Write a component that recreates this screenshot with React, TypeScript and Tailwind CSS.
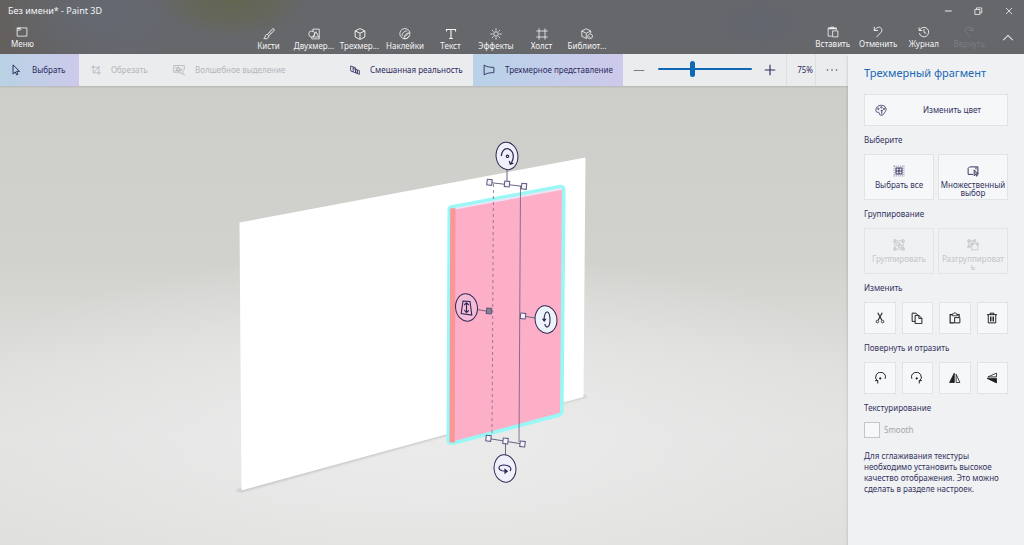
import type { ReactNode } from "react";

type IconProps = { children: ReactNode; className?: string };

function Icon({ children, className = "size-3.5" }: IconProps) {
  return (
    <svg
      viewBox="0 0 16 16"
      fill="none"
      stroke="currentColor"
      strokeWidth="1.1"
      className={`shrink-0 ${className}`}
      aria-hidden="true"
    >
      {children}
    </svg>
  );
}

const icons = {
  menu: (
    <>
      <path d="M1.500 2.500h13v11h-13zM1.500 5.500h4l1.500-1.500" />
      <path d="M2 3.200h4" strokeWidth="1.500" />
    </>
  ),
  brush: (
    <>
      <path d="M14.600 1.400c-.8-.8-1.800-.3-2.300.2L6 8.600l1.700 1.700 6.700-6.500c.6-.6 1-1.600.2-2.400z" strokeWidth="1.300" />
      <path d="M6 8.800c-1.800-.4-2.800.7-3 2.200-.2 1.600-.9 2.300-2 2.900 2.300 1 6.600.6 6.700-3.300" strokeWidth="1.300" />
      <path d="M9.200 6l1.500 1.500" />
    </>
  ),
  shapes: (
    <>
      <circle cx="5" cy="8" r="4" />
      <path d="M6.500 4.500V1.500h8.500v13H5V12" />
      <path d="M10.500 5l4 7h-8z" />
    </>
  ),
  cube: (
    <path d="M8 .8l6.500 3v8.200L8 15.200 1.500 12V3.800zM1.500 3.800L8 7l6.500-3.200M8 7v8.200" strokeWidth="1.300" />
  ),
  sticker: (
    <>
      <path d="M14 10.500A6.800 6.800 0 1 1 14.600 6.500" />
      <path d="M14.600 6.500C10 6.500 7 9 6.500 14.500 11 14.500 14.800 11 14.600 6.500z" />
      <path d="M4 10.500c.2-4 3-6.500 7-6.700M7 12l6-5" />
    </>
  ),
  text: <path d="M2 4.500V2h12v2.500M8 2v12M5.500 14h5" strokeWidth="1.500" />,
  effects: (
    <>
      <circle cx="8" cy="8" r="3" />
      <path d="M8 .5v3M8 12.500v3M.5 8h3M12.500 8h3M2.700 2.700l2.100 2.100M11.200 11.200l2.100 2.100M13.300 2.700l-2.100 2.100M4.800 11.200l-2.100 2.100" />
    </>
  ),
  canvas: <path d="M4 .5v15M12 .5v15M.5 4h15M.5 12h15" />,
  library: (
    <>
      <path d="M8 13.500l-1 .5-6-3V4l6-3 6 3v3M1 4l6 3 6-3M7 7v7" />
      <path d="M9 10l3-2.500 3.300 2-.5 3.500-3.300 1.500L9 13z" />
      <path d="M10.500 11.500l2 1" />
    </>
  ),
  paste: (
    <>
      <path d="M6.500 13.500h-5v-11h11v3M5 3.500V1.500h4v2z" />
      <path d="M7.500 6.500h7v8h-7z" />
      <path d="M2 3.500h10" strokeWidth="1.500" />
    </>
  ),
  undo: (
    <path
      d="M3 1v5h5M3 6l2.500-2.700C8.500.5 12 1.500 13 4.200c.7 2-.3 3.500-1.700 5L6 15"
      strokeWidth="1.200"
    />
  ),
  redo: (
    <path
      d="M13 1v5H8M13 6l-2.500-2.700C7.500.5 4 1.500 3 4.200c-.7 2 .3 3.500 1.700 5L10 15"
      strokeWidth="1.200"
    />
  ),
  history: (
    <path
      d="M1.500 2v4h4M2 6a6.300 6.300 0 1 1-.2 3.500M8 4v4.500l3 1.500"
      strokeWidth="1.200"
    />
  ),
  chevronUp: <path d="M1.500 11L8 4.500l6.500 6.500" strokeWidth="1.400" />,
  cursor: <path d="M4 1.200v12.300l3-3 1.800 4 1.800-.9-1.800-3.800h4z" strokeWidth="1.300" />,
  crop: <path d="M0 3.500h12.500V16M3.500 0v12.500H16M3.500 12.500L14.500 1.500" strokeWidth="1.300" />,
  magic: (
    <>
      <path d="M15 8V2H1v9h7" />
      <path d="M4 9l3-5 3 5zM3 5h2" strokeWidth="1.400" />
      <circle cx="10.500" cy="9.500" r="3" />
      <path d="M12.500 12l3 3" strokeWidth="1.400" />
    </>
  ),
  mixed: (
    <path
      d="M1 1.500l8 3v8l-8-3zM5 3v8M5 5.500l10 3.500v6l-5-2M9 7v5l3 1.500V8"
      strokeWidth="1.300"
    />
  ),
  view3d: <path d="M1.500 1.500v13c4-2.500 8-3 13-3v-7C9.500 4.500 5.500 4 1.500 1.500z" strokeWidth="1.200" />,
  palette: (
    <>
      <path d="M7 14.500c-1.500 0-1-1.500-1.200-2.500-.3-1.400-1.800-.8-3-1C.8 10.500.8 7.500 1.800 5.500 3.200 2.800 6 1.500 9 1.700c3.300.2 6 2.600 5.800 5.600-.2 2.600-2 3.500-2.500 5-.5 1.800-3.800 4-5.300 2.200z" />
      <circle cx="4.500" cy="6.500" r="1" />
      <circle cx="8.500" cy="4.500" r="1" />
      <circle cx="12" cy="6.500" r="1" />
      <path d="M9 8v6M7.500 9.500L9 8l1.500 1.500" />
    </>
  ),
  selectAll: (
    <>
      <path d="M1 1.500h14M1 14.500h14M1.500 1v14M14.500 1v14" strokeDasharray="1.500 1.200" opacity=".6" />
      <path d="M4 4h8v8H4zM4 8h8M8 4v8" strokeWidth="1.400" />
    </>
  ),
  multiSelect: (
    <>
      <path d="M8 12.500H1.500v-8L3.500 2.500h11v10M12 3v3" strokeWidth="1.300" />
      <path d="M9.500 6.500v8l2-2 1.300 2.500 1-.6-1.100-2.400H15z" fill="currentColor" fillOpacity=".4" />
    </>
  ),
  group: (
    <>
      <path d="M2.500 2.500h11v11h-11z" />
      <path d="M1 1h3v3H1zM12 1h3v3h-3zM1 12h3v3H1zM12 12h3v3h-3z" />
      <path d="M5 5h4v4H5zM7.500 7.500h4v4h-4z" />
    </>
  ),
  ungroup: (
    <>
      <path d="M2 2.500h8v3M2.500 2v8h3M1 1h3v3H1zM9 1h2.500v2.500H9zM1 9h2.500v2.500H1z" />
      <path d="M6.500 6.500h8v8h-8zM5 5h3v3H5zM13 5h2v3h-2z" />
    </>
  ),
  cut: (
    <>
      <path d="M5 1l5.500 10M11 1L5.500 11" strokeWidth="1.400" />
      <circle cx="4.500" cy="12.800" r="1.700" />
      <circle cx="11.500" cy="12.800" r="1.700" />
    </>
  ),
  copy: (
    <>
      <path d="M5.500 12.500h-4v-11h5l3 3" strokeWidth="1.300" />
      <path d="M5.500 4.500h5l4 4v7h-9zM10.500 4.500v4h4" strokeWidth="1.300" />
    </>
  ),
  paste2: (
    <>
      <path d="M7 14.500H1.500v-11H4M13.500 6.500v-3H11" strokeWidth="1.500" />
      <path d="M4.500 5V2.500h1.500l1-1.500h1.500l1 1.500H11V5z" />
      <path d="M7.500 7.500h7v7h-7z" strokeWidth="1.300" />
    </>
  ),
  trash: (
    <path
      d="M1.500 3.500h13M5.500 3.500v-2h5v2M3 3.500v11h10v-11M6 6v6.500M8 6v6.500M10 6v6.500"
      strokeWidth="1.300"
    />
  ),
  rotateLeft: (
    <>
      <path d="M5 15.300v-3.800H1.500M4.800 12A6.500 6.500 0 1 1 14.800 9" strokeWidth="1.300" />
      <circle cx="8.300" cy="8.500" r="1" fill="currentColor" />
    </>
  ),
  rotateRight: (
    <>
      <path d="M11 15.300v-3.800h3.500M11.200 12A6.500 6.500 0 1 0 1.200 9" strokeWidth="1.300" />
      <circle cx="7.700" cy="8.500" r="1" fill="currentColor" />
    </>
  ),
  flipH: (
    <>
      <path d="M7 1.500V14H.8z" fill="currentColor" />
      <path d="M9.500 3v11h5z" />
    </>
  ),
  flipV: (
    <>
      <path d="M14 8.500v6L1.500 8.500z" fill="currentColor" />
      <path d="M14 1.500v5H2.500z" />
    </>
  ),
};

type IconName = keyof typeof icons;

function NavButton({
  icon,
  label,
  disabled = false,
}: {
  icon: IconName;
  label: string;
  disabled?: boolean;
}) {
  return (
    <button
      type="button"
      disabled={disabled}
      className="flex min-w-0 flex-col items-center text-[#f4f4f5] disabled:text-white/15"
    >
      <Icon className="size-3">{icons[icon]}</Icon>
      <span className="whitespace-nowrap text-[8px] leading-3">{label}</span>
    </button>
  );
}

const tabs: { icon: IconName; label: string }[] = [
  { icon: "brush", label: "Кисти" },
  { icon: "shapes", label: "Двухмер..." },
  { icon: "cube", label: "Трехмер..." },
  { icon: "sticker", label: "Наклейки" },
  { icon: "text", label: "Текст" },
  { icon: "effects", label: "Эффекты" },
  { icon: "canvas", label: "Холст" },
  { icon: "library", label: "Библиот..." },
];

function Header() {
  return (
    <header className="h-[54px] shrink-0 bg-[#66676b] bg-[radial-gradient(ellipse_76px_38px_at_232px_0px,#62664f_0%,#63665299_55%,transparent_100%),radial-gradient(ellipse_100px_50px_at_100px_16px,#646972_0%,transparent_100%),radial-gradient(ellipse_50px_30px_at_760px_24px,#62666f_0%,transparent_100%),linear-gradient(90deg,#635f5d_0%,#66676b_12%)] text-[#f4f4f5]">
      <div className="flex h-[22px] items-center justify-between">
        <h1 className="pl-2 text-[9px]">Без имени* - Paint 3D</h1>
        <div className="flex">
          <button type="button" aria-label="Свернуть" className="grid w-[30px] place-items-center">
            <Icon className="size-2.5"><path d="M3 8h11" strokeWidth="1.500" /></Icon>
          </button>
          <button type="button" aria-label="Восстановить" className="grid w-[30px] place-items-center">
            <Icon className="size-2.5"><path d="M3 5.500h8v8H3zM5.500 5.500V3H14v8h-3" strokeWidth="1.300" /></Icon>
          </button>
          <button type="button" aria-label="Закрыть" className="grid w-[31px] place-items-center">
            <Icon className="size-2.5"><path d="M3 3l10 10M13 3L3 13" strokeWidth="1.300" /></Icon>
          </button>
        </div>
      </div>
      <div className="flex items-start pt-1">
        <div className="flex w-[24%] px-[11px]">
          <NavButton icon="menu" label="Меню" />
        </div>
        <nav className="grid w-[364px] shrink-0 grid-cols-8 pt-0.5">
          {tabs.map((tab) => (
            <NavButton key={tab.label} {...tab} />
          ))}
        </nav>
        <div className="flex flex-1 justify-end">
          <div className="grid w-[182px] shrink-0 grid-cols-4">
            <NavButton icon="paste" label="Вставить" />
            <NavButton icon="undo" label="Отменить" />
            <NavButton icon="history" label="Журнал" />
            <NavButton icon="redo" label="Вернуть" disabled />
          </div>
          <button type="button" aria-label="Свернуть ленту" className="grid w-8 shrink-0 place-items-center">
            <Icon className="size-3">{icons.chevronUp}</Icon>
          </button>
        </div>
      </div>
    </header>
  );
}

function Toolbar() {
  return (
    <div className="flex h-8 shrink-0 items-stretch bg-[#ebecee] text-[8px] text-[#2d2b5e] shadow-[0_1px_2px_#0000001c]">
      <button
        type="button"
        className="flex w-[79px] shrink-0 items-center gap-2.5 bg-linear-to-r from-[#b8d2e4] to-[#cdc9eb] pl-2.5"
      >
        <Icon className="size-3">{icons.cursor}</Icon>
        Выбрать
      </button>
      <button type="button" disabled className="flex w-[82px] shrink-0 items-center gap-2.5 pl-3 text-[#b4b5bb]">
        <Icon className="size-2.5">{icons.crop}</Icon>
        Обрезать
      </button>
      <button type="button" disabled className="flex shrink-0 items-center gap-2.5 pl-3 text-[#b4b5bb]">
        <Icon className="size-3">{icons.magic}</Icon>
        Волшебное выделение
      </button>
      <button type="button" className="ml-auto flex w-[123px] shrink-0 items-center gap-2.5 whitespace-nowrap">
        <Icon className="size-2.5">{icons.mixed}</Icon>
        Смешанная реальность
      </button>
      <button
        type="button"
        className="flex w-[150px] shrink-0 items-center gap-2.5 whitespace-nowrap bg-linear-to-r from-[#b8d2e8] to-[#cdc9eb] pl-2.5"
      >
        <Icon className="size-3">{icons.view3d}</Icon>
        Трехмерное представление
      </button>
      <div className="flex w-[163px] shrink-0 items-center justify-between px-2.5">
        <button type="button" aria-label="Уменьшить" className="text-[#77777f]">
          <Icon className="size-3"><path d="M1 8.700h14" strokeWidth="1.300" /></Icon>
        </button>
        <input
          type="range"
          aria-label="Масштаб"
          min={0}
          max={100}
          defaultValue={36}
          className="mb-0.5 h-4 w-[94px] appearance-none bg-transparent [&::-webkit-slider-runnable-track]:h-0.5 [&::-webkit-slider-runnable-track]:rounded-full [&::-webkit-slider-runnable-track]:bg-[#0f67b5] [&::-webkit-slider-thumb]:-mt-[7px] [&::-webkit-slider-thumb]:h-4 [&::-webkit-slider-thumb]:w-[5px] [&::-webkit-slider-thumb]:appearance-none [&::-webkit-slider-thumb]:rounded-full [&::-webkit-slider-thumb]:bg-[#0f67b5]"
        />
        <button type="button" aria-label="Увеличить">
          <Icon className="size-3"><path d="M1 8h14M8 1v14" strokeWidth="1.500" /></Icon>
        </button>
      </div>
      <output className="flex w-[30px] shrink-0 items-center justify-end border-x border-[#dddfe2] pr-0.5">75%</output>
      <button type="button" aria-label="Дополнительно" className="grid w-8 shrink-0 place-items-center">
        <Icon className="size-3">
          <path d="M1 8h2M7 8h2M13 8h2" strokeWidth="1.600" />
        </Icon>
      </button>
    </div>
  );
}

function Handle({ x, y, fill = "#f4f2fa" }: { x: number; y: number; fill?: string }) {
  return (
    <rect
      x={x - 2.5}
      y={y - 2.8}
      width="5"
      height="5.600"
      fill={fill}
      stroke="#5a5680"
      strokeWidth="1"
      transform={`rotate(6 ${x} ${y})`}
    />
  );
}

function Knob({
  x,
  y,
  fill = "#eff0fb",
  children,
}: {
  x: number;
  y: number;
  fill?: string;
  children: ReactNode;
}) {
  return (
    <g transform={`translate(${x} ${y})`} fill="none" stroke="#2d2852" strokeWidth="1.100">
      <ellipse rx="10.900" ry="13.800" fill={fill} strokeWidth="1" transform="rotate(-8)" />
      {children}
    </g>
  );
}

function Scene() {
  return (
    <svg
      viewBox="0 86 848 459"
      className="min-h-0 w-full flex-1"
      role="img"
      aria-label="Трехмерная сцена"
    >
      <defs>
        <filter id="shadow" x="-10%" y="-10%" width="120%" height="120%">
          <feGaussianBlur stdDeviation="1" />
        </filter>
      </defs>
      <path d="M235 491L245 487 580 394 588 396.500 242 492z" fill="#a9a9a8" opacity=".55" filter="url(#shadow)" />
      <path d="M239.500 222.500L585.500 157.500 583.500 397 241.500 490.500z" fill="#fff" />
      <path
        d="M451.500 207L559 186.700Q563.800 186 563.800 190L561.800 411Q561.800 414 559 415L454 443Q448.300 444 448.300 440.500L449.300 209.500Q449.300 207.500 451.500 207z"
        fill="#fdafc8"
        stroke="#98f8f6"
        strokeWidth="3.600"
      />
      <path d="M451 208.500L562 187.500 561.500 190 455 209.500z" fill="#e8e5f6" />
      <path d="M450.200 208.500L455.500 208 454.800 442.500 449.500 442.500z" fill="#fb9698" />
      <path d="M493.500 184L492 436" stroke="#8a6685" strokeWidth="1" strokeDasharray="3 3" opacity=".8" />
      <path d="M520.500 186L519 442" stroke="#77607f" strokeWidth="1" opacity=".85" />
      <path
        d="M489.500 182.500L524 186.500M488.500 438.500L522.500 444M507 170V184M505.500 441V455M477 309.500L489 311.500M523 316L535 318"
        stroke="#6a6680"
        strokeWidth="1"
      />
      <Handle x={489.500} y={182.300} />
      <Handle x={507} y={184} />
      <Handle x={524} y={186.300} />
      <Handle x={489} y={311} fill="#86808e" />
      <Handle x={523} y={316} />
      <Handle x={488.500} y={438.300} />
      <Handle x={505.500} y={441} />
      <Handle x={522.500} y={444} />
      <Knob x={507} y={156}>
        <path d="M-5.700 0C-5.500-4-3.200-7.300 0-7.300 4.500-7.300 7.500-2 5.800 3.500Q5 6.500 3.500 8M2.300 5L3.300 8.300 6.500 7.300" strokeWidth="1.200" />
        <circle cx=".5" cy=".3" r="1.200" />
      </Knob>
      <Knob x={466.500} y={307.500} fill="#f5bcd8">
        <path d="M-3.500-6.500L3.500-6 5.300 7.500-5.300 6z" />
        <path d="M0-4.500V5M-2.300-2.500L0-4.800 2.300-2.500M-2.300 2.500L0 5 2.300 3" />
      </Knob>
      <Knob x={546} y={319.500} fill="#edf3fa">
        <path d="M-1.500-3C-.8-10 4-9 4 .5 4 8 0 9.500-1.200 4.500M-1.800 1.500V-3" />
        <path d="M-3.200 -.3L-1.800 1.500-.5-.3z" fill="#2d2852" />
      </Knob>
      <Knob x={505} y={468.500}>
        <path d="M5 2.500C7.500-.5 4-3.500-1-3.500-7-3.500-7.500 1-3 2.200L1.500 2.600" />
        <path d="M0 .8L2.300 2.700 0 4.500z" fill="#2d2852" />
      </Knob>
    </svg>
  );
}

function PanelButton({
  icon,
  label,
  disabled = false,
}: {
  icon: IconName;
  label: string;
  disabled?: boolean;
}) {
  return (
    <button
      type="button"
      disabled={disabled}
      className="flex h-[46px] min-w-0 flex-col items-center gap-1 border border-[#e1e3e6] bg-[#f5f7f9] pt-2.5 disabled:bg-transparent disabled:px-0.5 disabled:text-[#c4c5ca]"
    >
      <Icon className="size-3">{icons[icon]}</Icon>
      <span className="w-full text-center leading-2 wrap-anywhere">{label}</span>
    </button>
  );
}

function IconRow({ items }: { items: { icon: IconName; label: string }[] }) {
  return (
    <div className="grid grid-cols-4 gap-1.5">
      {items.map((item) => (
        <button
          key={item.label}
          type="button"
          aria-label={item.label}
          className="grid h-8 place-items-center border border-[#e1e3e6] bg-[#f5f7f9] text-[#1d1d24]"
        >
          <Icon className="size-3">{icons[item.icon]}</Icon>
        </button>
      ))}
    </div>
  );
}

function SidePanel() {
  return (
    <aside className="flex w-44 shrink-0 flex-col gap-2 bg-[#eff1f3] px-4 pt-2.5 text-[8px] leading-3 text-[#34325f] shadow-[-1px_2px_2px_#0000001c]">
      <h2 className="mb-1 whitespace-nowrap text-[11px] leading-[18px] text-[#1a69b4]">Трехмерный фрагмент</h2>
      <button type="button" className="flex h-8 items-center border border-[#e1e3e6] bg-[#f5f7f9] pl-2.5">
        <Icon className="size-3">{icons.palette}</Icon>
        <span className="flex-1 pl-2.5 text-center">Изменить цвет</span>
      </button>
      <h3>Выберите</h3>
      <div className="grid grid-cols-2 gap-1">
        <PanelButton icon="selectAll" label="Выбрать все" />
        <PanelButton icon="multiSelect" label="Множественный выбор" />
      </div>
      <h3>Группирование</h3>
      <div className="grid grid-cols-2 gap-1">
        <PanelButton icon="group" label="Группировать" disabled />
        <PanelButton icon="ungroup" label="Разгруппировать" disabled />
      </div>
      <h3>Изменить</h3>
      <IconRow
        items={[
          { icon: "cut", label: "Вырезать" },
          { icon: "copy", label: "Копировать" },
          { icon: "paste2", label: "Вставить" },
          { icon: "trash", label: "Удалить" },
        ]}
      />
      <h3>Повернуть и отразить</h3>
      <IconRow
        items={[
          { icon: "rotateLeft", label: "Повернуть влево" },
          { icon: "rotateRight", label: "Повернуть вправо" },
          { icon: "flipH", label: "Отразить по горизонтали" },
          { icon: "flipV", label: "Отразить по вертикали" },
        ]}
      />
      <h3>Текстурирование</h3>
      <label className="flex items-center gap-1 text-[#a3a4aa]">
        <input type="checkbox" className="size-4 appearance-none border border-[#c4c5ca] bg-[#f7f8fa]" />
        Smooth
      </label>
      <p className="pt-1 leading-[11px]">
        Для сглаживания текстуры необходимо установить высокое качество отображения. Это можно сделать в разделе
        настроек.
      </p>
    </aside>
  );
}

export default function App() {
  return (
    <div className="flex h-screen flex-col overflow-hidden font-['Noto_Sans','Open_Sans',sans-serif]">
      <Header />
      <div className="flex min-h-0 flex-1">
        <main className="flex min-w-0 flex-1 flex-col bg-[radial-gradient(ellipse_60%_38%_at_50%_78%,#ebebeb_0%,#ebebebaa_40%,transparent_100%),linear-gradient(180deg,#cdcec9_6%,#d1d2cd_42%,#dddddb_62%,#e2e2e1_78%,#dfdfdd_100%)]">
          <Toolbar />
          <Scene />
        </main>
        <SidePanel />
      </div>
    </div>
  );
}
